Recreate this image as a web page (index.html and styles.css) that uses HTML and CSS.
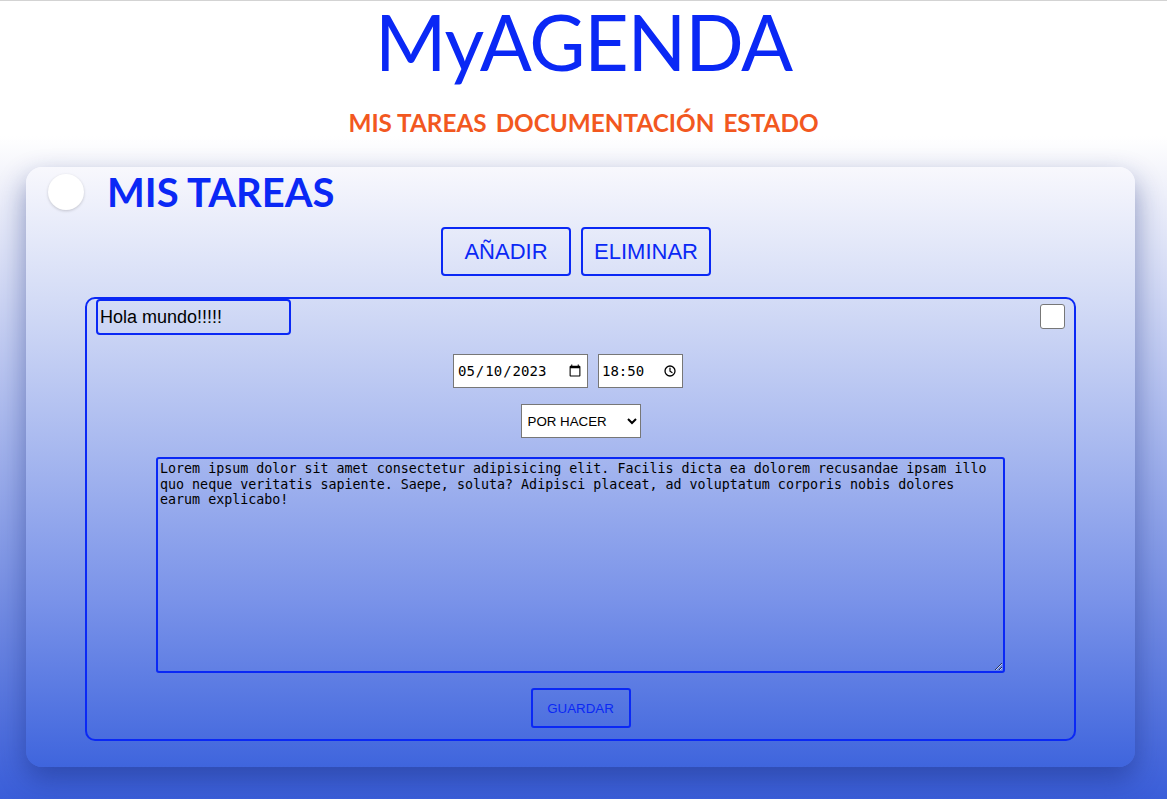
FILE: index.html
```html
<!DOCTYPE html>
<html lang="es">
<head>
<meta charset="utf-8">
<title>MyAGENDA</title>
<link rel="stylesheet" href="styles.css">
</head>
<body>
<header class="site-header">
  <h1 class="brand">MyAGENDA</h1>
  <nav class="main-nav">
    <a href="#">MIS TAREAS</a>
    <a href="#">DOCUMENTACIÓN</a>
    <a href="#">ESTADO</a>
  </nav>
</header>
<main class="panel">
  <div class="panel-head">
    <span class="dot"></span>
    <h2 class="panel-title">MIS TAREAS</h2>
  </div>
  <div class="actions">
    <button class="btn">AÑADIR</button>
    <button class="btn">ELIMINAR</button>
  </div>
  <section class="task">
    <div class="task-top">
      <input class="task-name" type="text" value="Hola mundo!!!!!">
      <input class="task-check" type="checkbox">
    </div>
    <div class="task-when">
      <input class="field date" type="date" value="2023-05-10">
      <label class="field time">
        <input class="time-text" type="text" value="18:50">
        <svg class="clock" width="12" height="12" viewBox="0 0 12 12" aria-hidden="true">
          <circle cx="6" cy="6" r="5" fill="none" stroke="#000" stroke-width="1.3"/>
          <path d="M6 3v3.2l2 1.4" fill="none" stroke="#000" stroke-width="1.2" stroke-linecap="round"/>
        </svg>
      </label>
    </div>
    <div class="task-state">
      <select class="field state">
        <option>POR HACER</option>
        <option>EN CURSO</option>
        <option>HECHO</option>
      </select>
    </div>
    <textarea class="task-desc">Lorem ipsum dolor sit amet consectetur adipisicing elit. Facilis dicta ea dolorem recusandae ipsam illo quo neque veritatis sapiente. Saepe, soluta? Adipisci placeat, ad voluptatum corporis nobis dolores earum explicabo!</textarea>
    <div class="task-save">
      <button class="btn-small">GUARDAR</button>
    </div>
  </section>
</main>
</body>
</html>
```
FILE: styles.css
```css
html {
  height: 100%;
}
body {
  margin: 0;
  min-height: 799px;
  border-top: 1px solid #d3d3d3;
  box-sizing: border-box;
  background: linear-gradient(to bottom, #ffffff 0%, #ffffff 17%, #f3f4fb 22%, #3a5ed9 100%);
  font-family: "Liberation Sans", Arial, sans-serif;
  display: flex;
  flex-direction: column;
  align-items: center;
}
.site-header {
  display: flex;
  flex-direction: column;
  align-items: center;
}
.brand {
  margin: 0;
  font-family: Lato, "Open Sans", sans-serif;
  font-weight: 400;
  font-size: 77px;
  line-height: 80px;
  color: #0a28f5;
  letter-spacing: -1.2px;
}
.main-nav {
  margin-top: 27px;
  display: flex;
  gap: 9px;
}
.main-nav a {
  font-family: Lato, "Open Sans", sans-serif;
  font-weight: 700;
  font-size: 24.3px;
  color: #f2581f;
  text-decoration: none;
}
.panel {
  margin-top: 30px;
  margin-right: 6px;
  width: 1109px;
  height: 600px;
  box-sizing: border-box;
  border-radius: 16px;
  background: linear-gradient(to bottom, #f8f8fd 0%, #d4dcf6 22%, #a6b7ef 48%, #7a93e9 72%, #3f65dd 100%);
  box-shadow: 0 12px 28px rgba(20, 40, 120, 0.45);
  padding: 8px 59px 0 59px;
  display: flex;
  flex-direction: column;
}
.panel-head {
  display: flex;
  align-items: center;
  margin-left: -37px;
  gap: 23px;
  height: 34px;
}
.dot {
  width: 36px;
  height: 36px;
  border-radius: 50%;
  background: #fff;
  box-shadow: 0 1px 3px rgba(0, 0, 0, 0.18);
  flex: none;
}
.panel-title {
  margin: 0;
  font-family: Lato, "Open Sans", sans-serif;
  font-weight: 700;
  font-size: 40px;
  color: #0a28f5;
  line-height: 40px;
}
.actions {
  display: flex;
  justify-content: center;
  gap: 10px;
  margin-top: 18px;
  padding-right: 9px;
}
.btn {
  width: 130px;
  height: 49px;
  border: 2px solid #0a28f5;
  border-radius: 4px;
  background: transparent;
  color: #0a28f5;
  font-family: "Liberation Sans", Arial, sans-serif;
  font-size: 22px;
  padding: 0;
}
.task {
  margin-top: 21px;
  height: 444px;
  box-sizing: border-box;
  border: 2px solid #0a28f5;
  border-radius: 10px;
  padding: 0 9px 0 9px;
  display: flex;
  flex-direction: column;
}
.task-top {
  display: flex;
  justify-content: space-between;
  align-items: flex-start;
}
.task-name {
  width: 195px;
  height: 36px;
  box-sizing: border-box;
  border: 2px solid #0a28f5;
  border-radius: 4px;
  background: transparent;
  font-family: "Liberation Sans", Arial, sans-serif;
  font-size: 18px;
  color: #000;
  padding: 0 2px;
  outline: none;
}
.task-check {
  appearance: none;
  width: 25px;
  height: 25px;
  margin: 5px 0 0 0;
  background: #fff;
  border: 1px solid #777;
  border-radius: 3px;
}
.task-when {
  display: flex;
  justify-content: center;
  gap: 10px;
  margin-top: 19px;
  padding-right: 25px;
}
.field {
  height: 34px;
  box-sizing: border-box;
  border: 1px solid #777;
  border-radius: 0;
  background: #fff;
  color: #000;
}
.date {
  width: 135px;
  font-family: "DejaVu Sans Mono", monospace;
  font-size: 14px;
  padding: 0 3px;
}
.time {
  width: 85px;
  display: flex;
  align-items: center;
  padding: 0 6px 0 3px;
}
.time-text {
  width: 50px;
  border: 0;
  padding: 0;
  background: transparent;
  font-family: "DejaVu Sans Mono", monospace;
  font-size: 14px;
  color: #000;
  outline: none;
}
.clock {
  margin-left: auto;
}
.task-state {
  display: flex;
  justify-content: center;
  margin-top: 16px;
}
.state {
  width: 120px;
  font-family: "Liberation Sans", Arial, sans-serif;
  font-size: 13.333px;
  padding: 0 2px;
}
.task-desc {
  align-self: center;
  margin-top: 19px;
  width: 849px;
  height: 216px;
  box-sizing: border-box;
  border: 2px solid #0a28f5;
  border-radius: 3px;
  background: transparent;
  font-family: "DejaVu Sans Mono", monospace;
  font-size: 13.333px;
  line-height: 15.5px;
  color: #000;
  padding: 2px 2px;
  resize: both;
  outline: none;
}
.task-save {
  display: flex;
  justify-content: center;
  margin-top: 15px;
}
.btn-small {
  width: 100px;
  height: 40px;
  border: 2px solid #0a28f5;
  border-radius: 3px;
  background: transparent;
  color: #0a28f5;
  font-family: "Liberation Sans", Arial, sans-serif;
  font-size: 13.333px;
  padding: 0;
}
```
